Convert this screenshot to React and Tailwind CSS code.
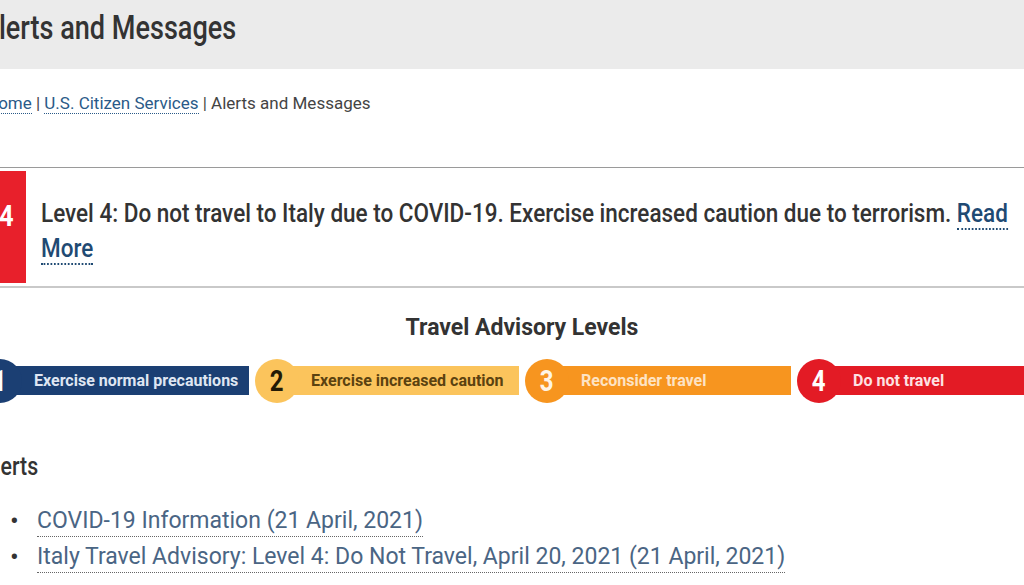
const roboto = { fontFamily: 'Roboto, "Liberation Sans", sans-serif' };

const levels = [
  { n: '1', label: 'Exercise normal precautions', bg: 'bg-[#1b3f73]', num: 'text-white', txt: 'text-[#dfe6f2]', w: 'w-[277px]' },
  { n: '2', label: 'Exercise increased caution', bg: 'bg-[#fbc45c]', num: 'text-[#231a06]', txt: 'text-[#5b4210]', w: 'w-[270px]' },
  { n: '3', label: 'Reconsider travel', bg: 'bg-[#f7951f]', num: 'text-[#fff4e6]', txt: 'text-[#fde3c4]', w: 'w-[272px]' },
  { n: '4', label: 'Do not travel', bg: 'bg-[#e31b25]', num: 'text-white', txt: 'text-[#fde2e3]', w: 'w-[300px]' },
];

const alerts = [
  'COVID-19 Information (21 April, 2021)',
  'Italy Travel Advisory: Level 4: Do Not Travel, April 20, 2021 (21 April, 2021)',
];

// condensed look: Roboto squeezed horizontally
function Narrow({ children, className = 'scale-x-[0.82]' }) {
  return (
    <span className={`inline-block origin-left whitespace-nowrap ${className}`} style={roboto}>
      {children}
    </span>
  );
}

function LevelBar({ n, label, bg, num, txt, w }) {
  return (
    <div className={`relative flex items-center h-[44px] shrink-0 ${w}`}>
      <div className={`absolute left-[22px] right-[6px] top-[7px] h-[29px] ${bg}`} />
      <div className={`relative z-10 w-[44px] h-[44px] rounded-full ${bg} ${num} flex items-center justify-center`}>
        <span className="inline-block scale-x-[0.8] text-[30px] font-bold leading-none" style={roboto}>{n}</span>
      </div>
      <span className={`relative z-10 ml-[12px] text-[16px] font-bold ${txt}`} style={roboto}>
        {label}
      </span>
    </div>
  );
}

export default function App() {
  return (
    <div className="w-[1024px] h-[585px] overflow-hidden bg-white">
      {/* grey page title band */}
      <div className="h-[69px] bg-[#ebebeb] pt-[9px]">
        <h1 className="-ml-[19px] text-[33px] leading-[36px] text-[#333] font-medium">
          <Narrow>Alerts and Messages</Narrow>
        </h1>
      </div>

      {/* breadcrumb */}
      <div className="h-[98px] pt-[22px] -ml-[14px] text-[17px] text-[#444]" style={roboto}>
        <a className="text-[#2a5a88] border-b border-dotted border-[#2a5a88]">Home</a>
        <span> | </span>
        <a className="text-[#2a5a88] border-b border-dotted border-[#2a5a88]">U.S. Citizen Services</a>
        <span> | Alerts and Messages</span>
      </div>

      {/* level 4 alert */}
      <div className="h-[121px] border-t border-b-2 border-t-[#9a9a9a] border-b-[#c9c9c9] flex py-[3px] overflow-hidden">
        <div className="w-[26px] shrink-0 bg-[#e8202b] overflow-hidden pt-[30px]">
          <span className="block -ml-[1px] scale-x-[0.85] origin-left text-white text-[30px] font-bold leading-none" style={roboto}>4</span>
        </div>
        <div className="ml-[15px] pt-[24px] text-[26px] leading-[34px] text-[#333] font-medium">
          <Narrow className="scale-x-[0.865]">
            Level 4: Do not travel to Italy due to COVID-19. Exercise increased caution due to terrorism.{' '}
            <a className="text-[#1f4a73] border-b-2 border-dotted border-[#1f4a73]">Read</a>
          </Narrow>
          <br />
          <Narrow className="scale-x-[0.865]">
            <a className="text-[#1f4a73] border-b-2 border-dotted border-[#1f4a73]">More</a>
          </Narrow>
        </div>
      </div>

      {/* travel advisory levels */}
      <div className="pt-[27px] pl-[20px] text-center text-[23px] font-bold text-[#333] leading-[26px]" style={roboto}>
        Travel Advisory Levels
      </div>
      <div className="mt-[18px] flex -ml-[22px]">
        {levels.map((l) => (
          <LevelBar key={l.n} {...l} />
        ))}
      </div>

      {/* alerts list */}
      <h2 className="mt-[46px] -ml-[19px] text-[26px] leading-[32px] text-[#333] font-medium">
        <Narrow>Alerts</Narrow>
      </h2>
      <ul className="mt-[21px] text-[23px] leading-[36px] text-[#4a6584]" style={roboto}>
        {alerts.map((a) => (
          <li key={a} className="flex">
            <span className="w-[37px] pl-[10px] text-[26px] text-[#333]">•</span>
            <a className="border-b border-dotted border-[#666] leading-[30px] self-center">{a}</a>
          </li>
        ))}
      </ul>
    </div>
  );
}
